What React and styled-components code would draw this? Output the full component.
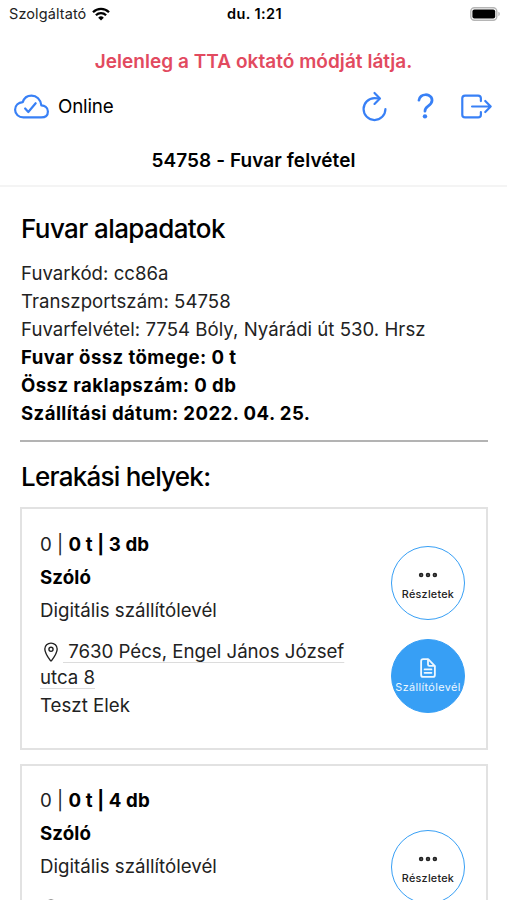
import styled, { createGlobalStyle } from "styled-components";
import {
  IoCloudDoneOutline,
  IoDocumentTextOutline,
  IoEllipsisHorizontalOutline,
  IoExitOutline,
  IoHelpOutline,
  IoLocationOutline,
  IoRefreshOutline,
} from "react-icons/io5";

const GlobalStyle = createGlobalStyle`
  * {
    box-sizing: border-box;
    margin: 0;
    padding: 0;
  }

  body {
    background-color: #fff;
    color: #000;
    font-family: Inter, "Liberation Sans", sans-serif;
    overflow: hidden;
  }
`;

const Screen = styled.div`
  display: flex;
  flex-direction: column;
  width: 100%;
  height: 100vh;
  overflow: hidden;
  background-color: #fff;
`;

const StatusBar = styled.div`
  display: grid;
  grid-template-columns: 1fr auto 1fr;
  align-items: center;
  flex-shrink: 0;
  height: 27px;
  padding: 0 7px 0 9px;
  font-size: 14.5px;
`;

const Carrier = styled.div`
  display: flex;
  align-items: center;
  gap: 6px;
  color: #222;
  letter-spacing: 0.1px;
`;

const Clock = styled.div`
  font-weight: 600;
  font-size: 14.5px;
  letter-spacing: 0.4px;
`;

const BatteryIcon = styled.svg`
  justify-self: end;
`;

const Notice = styled.p`
  flex-shrink: 0;
  height: 66px;
  line-height: 69px;
  text-align: center;
  font-size: 19px;
  font-weight: 600;
  letter-spacing: 0.04px;
  color: #e24a5f;
`;

const Toolbar = styled.div`
  display: flex;
  justify-content: space-between;
  align-items: center;
  flex-shrink: 0;
  height: 26px;
  padding: 0 13px 0 14px;
`;

const Connection = styled.div`
  display: flex;
  align-items: center;
  gap: 9px;
  font-size: 18.8px;
  letter-spacing: -0.2px;

  svg {
    color: #3880f6;
  }
`;

const ToolbarActions = styled.div`
  display: flex;
  gap: 16px;
`;

const IconButton = styled.button`
  display: flex;
  border: none;
  background: none;
  color: #3880f6;
  cursor: pointer;
`;

const PageTitle = styled.h1`
  flex-shrink: 0;
  height: 68px;
  padding-top: 15px;
  line-height: 53px;
  border-bottom: 2px solid #f4f4f4;
  text-align: center;
  font-size: 19px;
  font-weight: 600;
  letter-spacing: 0.08px;
`;

const Content = styled.main`
  flex: 1;
  min-height: 0;
  overflow: hidden;
  padding: 22px 19px 0 20px;
`;

const SectionTitle = styled.h2`
  padding-left: 1px;
  line-height: 40px;
  font-size: 26px;
  font-weight: 500;
  letter-spacing: ${(props) => props.$spacing || "-0.6px"};
`;

const Details = styled.div`
  padding: 10px 0 13px 1px;
  margin-bottom: 15px;
  border-bottom: 2px solid #b3b3b3;
`;

const Detail = styled.p`
  line-height: 28px;
  font-size: 18.6px;
  font-weight: ${(props) => (props.$bold ? 700 : 400)};
  color: ${(props) => (props.$bold ? "#000" : "#222")};
  letter-spacing: ${(props) => (props.$bold ? "0.42px" : "0.03px")};
`;

const CardList = styled.div`
  display: flex;
  flex-direction: column;
  gap: 14px;
  margin-top: 10px;
`;

const Card = styled.article`
  display: flex;
  align-items: center;
  justify-content: space-between;
  flex-shrink: 0;
  height: ${(props) => (props.$tall ? 299 : 243)}px;
  padding: ${(props) => (props.$tall ? 17 : 18)}px 21px 0 18px;
  border: 2px solid #e2e2e2;
`;

const CardInfo = styled.div`
  align-self: flex-start;
  width: 312px;
  padding-top: 1px;
  font-size: 18.7px;
  color: #222;
`;

const InfoRow = styled.p`
  line-height: 33px;

  strong {
    font-weight: 700;
    color: #000;
    letter-spacing: 0.1px;
  }
`;

const Address = styled.p`
  margin-top: ${(props) => (props.$spaced ? 13 : 12)}px;
  line-height: 26px;

  svg {
    margin: 0 1px -5px 0;
  }
`;

const AddressLink = styled.a`
  letter-spacing: -0.03px;
  text-decoration: underline;
  text-decoration-color: #dcdcdc;
  text-decoration-thickness: 1px;
  text-underline-offset: 4px;
  text-decoration-skip-ink: none;
`;

const Contact = styled.p`
  line-height: 30px;
`;

const CardActions = styled.div`
  display: flex;
  flex-direction: column;
  gap: 19px;
  margin-top: -17px;
`;

const RoundButton = styled.button`
  display: flex;
  flex-direction: column;
  align-items: center;
  justify-content: center;
  width: 74px;
  height: 74px;
  padding-top: 2px;
  border: 1.5px solid #379ff5;
  border-radius: 50%;
  background-color: ${(props) => (props.$filled ? "#379ff5" : "#fff")};
  color: ${(props) => (props.$filled ? "#eef8ff" : "#222")};
  font-family: inherit;
  font-size: 10.8px;
  font-weight: ${(props) => (props.$filled ? 400 : 500)};
  line-height: 18px;
  letter-spacing: ${(props) => (props.$filled ? 0.4 : 0.25)}px;
  white-space: nowrap;
  cursor: pointer;

  svg path,
  svg circle {
    stroke-width: 42px;
  }
`;

const stops = [
  { id: 1, pallets: 3, tall: false },
  { id: 2, pallets: 4, tall: true },
];

function StopCard({ stop }) {
  return (
    <Card $tall={stop.tall}>
      <CardInfo>
        <InfoRow>
          0 | <strong>0 t | {stop.pallets} db</strong>
        </InfoRow>
        <InfoRow>
          <strong>Szóló</strong>
        </InfoRow>
        <InfoRow>Digitális szállítólevél</InfoRow>
        <Address $spaced={stop.tall}>
          <IoLocationOutline size={22} />
          <AddressLink>&nbsp;7630 Pécs, Engel János József utca 8</AddressLink>
        </Address>
        <Contact>Teszt Elek</Contact>
      </CardInfo>

      <CardActions>
        <RoundButton>
          <IoEllipsisHorizontalOutline size={22} />
          Részletek
        </RoundButton>
        <RoundButton $filled>
          <IoDocumentTextOutline size={22} />
          Szállítólevél
        </RoundButton>
      </CardActions>
    </Card>
  );
}

function App() {
  return (
    <Screen>
      <GlobalStyle />

      <StatusBar>
        <Carrier>
          Szolgáltató
          <svg width="18" height="14" viewBox="0 0 18 14">
            <g fill="none" stroke="#000" strokeWidth="2.3">
              <path d="M1 5.2a11.4 11.4 0 0 1 16 0" />
              <path d="M3.9 8.3a7.3 7.3 0 0 1 10.2 0" />
            </g>
            <path d="M9 13.6L6.2 10.7a4 4 0 0 1 5.6 0z" />
          </svg>
        </Carrier>
        <Clock>du. 1:21</Clock>
        <BatteryIcon width="30" height="14" viewBox="0 0 30 14">
          <rect
            x="0.8"
            y="0.8"
            width="26"
            height="12.4"
            rx="3.6"
            fill="#fff"
            stroke="#b5b5b5"
            strokeWidth="1.4"
          />
          <rect x="2.4" y="2.4" width="22.8" height="9.2" rx="2" />
          <path d="M28.4 4.8a2.4 2.4 0 0 1 0 4.4z" fill="#b5b5b5" />
        </BatteryIcon>
      </StatusBar>

      <Notice>Jelenleg a TTA oktató módját látja.</Notice>

      <Toolbar>
        <Connection>
          <IoCloudDoneOutline size={35} />
          Online
        </Connection>
        <ToolbarActions>
          <IconButton>
            <IoRefreshOutline size={35} />
          </IconButton>
          <IconButton>
            <IoHelpOutline size={35} />
          </IconButton>
          <IconButton>
            <IoExitOutline size={35} />
          </IconButton>
        </ToolbarActions>
      </Toolbar>

      <PageTitle>54758 - Fuvar felvétel</PageTitle>

      <Content>
        <SectionTitle>Fuvar alapadatok</SectionTitle>
        <Details>
          <Detail>Fuvarkód: cc86a</Detail>
          <Detail>Transzportszám: 54758</Detail>
          <Detail>Fuvarfelvétel: 7754 Bóly, Nyárádi út 530. Hrsz</Detail>
          <Detail $bold>Fuvar össz tömege: 0 t</Detail>
          <Detail $bold>Össz raklapszám: 0 db</Detail>
          <Detail $bold>Szállítási dátum: 2022. 04. 25.</Detail>
        </Details>

        <SectionTitle $spacing="-0.75px">Lerakási helyek:</SectionTitle>
        <CardList>
          {stops.map((stop) => (
            <StopCard key={stop.id} stop={stop} />
          ))}
        </CardList>
      </Content>
    </Screen>
  );
}

export default App;
